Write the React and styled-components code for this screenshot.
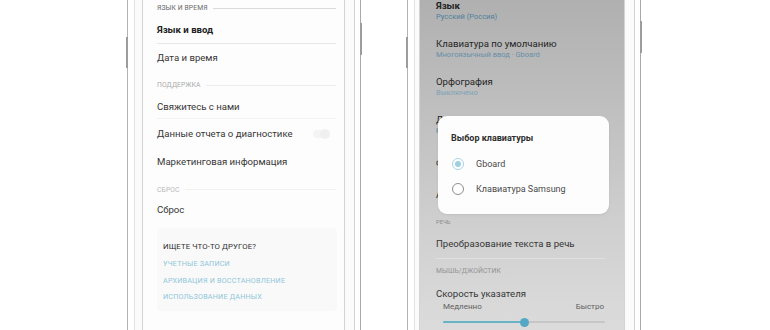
import React from 'react';
import styled, { createGlobalStyle } from 'styled-components';

const GlobalStyle = createGlobalStyle`
  *, *::before, *::after { box-sizing: border-box; }
  html, body { margin: 0; padding: 0; background: #fff; }
  body {
    width: 770px;
    height: 330px;
    overflow: hidden;
    font-family: Roboto, "Noto Sans", "Liberation Sans", sans-serif;
  }
`;

const Stage = styled.div`
  display: flex;
  align-items: flex-start;
  gap: 46px;
  padding-left: 127px;
  height: 330px;
`;

const Phone = styled.div`
  position: relative;
  display: flex;
  width: 234px;
  height: 360px;
  padding: 0 ${({ $padR }) => $padR}px 0 ${({ $padL }) => $padL}px;
  background: #fbfbfb;
  border-left: 1px solid #b3b3b3;
  border-right: 1px solid #a9a9a9;
  box-shadow: inset -5px 0 0 #fff, inset -6px 0 0 #d2d2d2, inset 6px 0 0 #fff, inset 7px 0 0 #e2e2e2;

  /* side keys */
  &::before,
  &::after {
    content: '';
    position: absolute;
    width: 2px;
    height: 31px;
    background: #9c9c9c;
  }
  &::before { left: -2px; top: 37px; }
  &::after { right: -2px; top: ${({ $keyTop }) => $keyTop}px; height: 32px; }
`;

const Screen = styled.div`
  position: relative;
  flex: 1;
  display: flex;
  flex-direction: column;
  overflow: hidden;
  padding: 0 ${({ $padR }) => $padR}px 0 ${({ $padL }) => $padL}px;
  border-left: 1px solid #d3d3d3;
  border-right: 1px solid #d3d3d3;
  background: ${({ $dim }) =>
    $dim
      ? 'linear-gradient(180deg, #b0b0b0 0%, #bfbfbf 30%, #cecece 60%, #d9d9d9 85%, #dddddd 100%)'
      : '#fdfdfd'};
`;

/* ---------- left screen ---------- */

const SectionLabel = styled.div`
  display: flex;
  align-items: center;
  gap: 5px;
  height: 10px;
  margin-top: ${({ $mt }) => $mt}px;
  font-size: ${({ $size }) => $size || 6.8}px;
  line-height: 10px;
  letter-spacing: 0.1px;
  color: ${({ $tone }) => $tone || '#ababab'};
  white-space: nowrap;

  &::after {
    content: '';
    flex: ${({ $noLine }) => ($noLine ? 0 : 1)};
    height: 1px;
    background: ${({ $line }) => $line || '#ececec'};
  }
`;

const Row = styled.div`
  display: flex;
  align-items: center;
  justify-content: space-between;
  margin-top: ${({ $mt }) => $mt || 0}px;
  padding-bottom: ${({ $pb }) => $pb || 0}px;
  line-height: ${({ $lh }) => $lh || 14}px;
  font-size: ${({ $size }) => $size || 9.6}px;
  font-weight: ${({ $bold }) => ($bold ? 700 : 400)};
  color: ${({ $bold }) => ($bold ? '#222' : '#363636')};
  border-bottom: ${({ $divider }) => ($divider ? `1px solid ${$divider}` : 'none')};
  white-space: nowrap;
`;

const Toggle = styled.span`
  position: relative;
  width: 17px;
  height: 8px;
  margin-right: 6px;
  border-radius: 4px;
  background: #f4f4f4;

  &::after {
    content: '';
    position: absolute;
    right: 0;
    top: -1px;
    width: 10px;
    height: 10px;
    border-radius: 50%;
    background: #f0f0f0;
  }
`;

const Card = styled.div`
  display: flex;
  flex-direction: column;
  gap: 7.5px;
  margin-top: 11px;
  margin-right: -1px;
  padding: 13px 6px 10px;
  border-radius: 4px;
  background: #f9f9f9;
`;

const CardTitle = styled.div`
  font-size: 7.8px;
  line-height: 11px;
  color: #303030;
  letter-spacing: 0.1px;
`;

const CardLink = styled.div`
  font-size: 7.2px;
  line-height: 9px;
  color: #8fc6da;
  letter-spacing: 0.2px;
`;

/* ---------- right screen ---------- */

const ItemList = styled.div`
  display: flex;
  flex-direction: column;
  margin-top: -9px;
`;

const Item = styled.div`
  display: flex;
  flex-direction: column;
  justify-content: center;
  height: ${({ $h }) => $h || 38}px;
`;

const ItemTitle = styled.div`
  font-size: 9.6px;
  line-height: 13px;
  font-weight: ${({ $bold }) => ($bold ? 700 : 400)};
  color: #252525;
  white-space: nowrap;
`;

const ItemSub = styled.div`
  font-size: 7.5px;
  line-height: 10px;
  color: ${({ $tone }) => $tone || '#4f7f9a'};
  white-space: nowrap;
`;

const SpeedLabels = styled.div`
  display: flex;
  justify-content: space-between;
  margin-top: 2.5px;
  padding: 0 1px 0 7px;
  font-size: 8px;
  line-height: 10px;
  color: #5e5e5e;
`;

const Slider = styled.div`
  position: relative;
  height: 10px;
  margin: 5px 0 0 7px;
  display: flex;
  align-items: center;
`;

const Track = styled.div`
  position: relative;
  flex: 1;
  height: 2px;
  border-radius: 1px;
  background: #c6c6c6;
`;

const TrackFill = styled.div`
  height: 2px;
  border-radius: 1px;
  background: #69b3c6;
`;

const Thumb = styled.div`
  position: absolute;
  top: 50%;
  width: 9px;
  height: 9px;
  margin: -4.5px 0 0 -4.5px;
  border-radius: 50%;
  background: #54a8c6;
`;

const Dialog = styled.div`
  position: absolute;
  left: 18px;
  top: 116px;
  width: 171px;
  height: 98px;
  padding: 16px 0 0 13px;
  border-radius: 9px;
  background: #fdfdfd;
  box-shadow: 0 1px 3px rgba(0, 0, 0, 0.06);
`;

const DialogTitle = styled.div`
  font-size: 9px;
  line-height: 12px;
  font-weight: 700;
  color: #2e2e2e;
  margin-bottom: 7.5px;
`;

const Option = styled.div`
  display: flex;
  align-items: center;
  gap: 12px;
  height: 25px;
  padding-left: 1px;
  font-size: 9px;
  color: #4a4a4a;
`;

const Radio = styled.span`
  position: relative;
  width: 12px;
  height: 12px;
  border-radius: 50%;
  border: 1px solid ${({ $on }) => ($on ? '#a9d4e4' : '#8e8e8e')};
  background: #fff;

  &::after {
    content: '';
    position: absolute;
    inset: 2px;
    border-radius: 50%;
    background: ${({ $on }) => ($on ? '#9fd0e2' : 'transparent')};
  }
`;

const links = ['УЧЕТНЫЕ ЗАПИСИ', 'АРХИВАЦИЯ И ВОССТАНОВЛЕНИЕ', 'ИСПОЛЬЗОВАНИЕ ДАННЫХ'];

const speed = 0.5;

export default function App() {
  return (
    <>
      <GlobalStyle />
      <Stage>
        <Phone $padL={14} $padR={15} $keyTop={23}>
          <Screen $padL={14} $padR={8}>
            <SectionLabel $mt={3} $tone="#6a6a6a" $line="#dadada">ЯЗЫК И ВРЕМЯ</SectionLabel>
            <Row $mt={10} $pb={6} $bold $divider="#e7e7e7">Язык и ввод</Row>
            <Row $mt={7}>Дата и время</Row>
            <SectionLabel $mt={15}>ПОДДЕРЖКА</SectionLabel>
            <Row $mt={10} $pb={4} $divider="#f3f3f3">Свяжитесь с нами</Row>
            <Row $mt={8}>
              Данные отчета о диагностике
              <Toggle />
            </Row>
            <Row $mt={13.5}>Маркетинговая информация</Row>
            <SectionLabel $mt={16} $tone="#b9b9b9" $line="#f1f1f1">СБРОС</SectionLabel>
            <Row $mt={8}>Сброс</Row>
            <Card>
              <CardTitle>ИЩЕТЕ ЧТО-ТО ДРУГОЕ?</CardTitle>
              {links.map((l) => (
                <CardLink key={l}>{l}</CardLink>
              ))}
            </Card>
          </Screen>
        </Phone>

        <Phone $padL={11} $padR={15} $keyTop={21}>
          <Screen $dim $padL={16} $padR={19}>
            <ItemList>
              <Item>
                <ItemTitle $bold>Язык</ItemTitle>
                <ItemSub>Русский (Россия)</ItemSub>
              </Item>
              <Item>
                <ItemTitle>Клавиатура по умолчанию</ItemTitle>
                <ItemSub $tone="#6790a8">Многоязычный ввод · Gboard</ItemSub>
              </Item>
              <Item>
                <ItemTitle>Орфография</ItemTitle>
                <ItemSub $tone="#7ba2b6">Выключено</ItemSub>
              </Item>
              <Item>
                <ItemTitle>Другой ввод</ItemTitle>
                <ItemSub>Настройки</ItemSub>
              </Item>
              <Item>
                <ItemTitle>Физическая клавиатура</ItemTitle>
              </Item>
              <Item $h={27}>
                <ItemTitle>Автозаполнение</ItemTitle>
              </Item>
            </ItemList>
            <SectionLabel $mt={8.5} $size={5.6} $tone="#8d8d8d" $noLine>РЕЧЬ</SectionLabel>
            <Row $mt={10.5} $pb={7.5} $lh={13} $divider="#e0e0e0">
              Преобразование текста в речь
            </Row>
            <SectionLabel $mt={7} $size={6.8} $tone="#939393" $noLine>МЫШЬ/ДЖОЙСТИК</SectionLabel>
            <Row $mt={11} $lh={13}>Скорость указателя</Row>
            <SpeedLabels>
              <span>Медленно</span>
              <span>Быстро</span>
            </SpeedLabels>
            <Slider>
              <Track>
                <TrackFill style={{ width: `${speed * 100}%` }} />
                <Thumb style={{ left: `${speed * 100}%` }} />
              </Track>
            </Slider>
            <Dialog>
              <DialogTitle>Выбор клавиатуры</DialogTitle>
              <Option>
                <Radio $on />
                Gboard
              </Option>
              <Option>
                <Radio />
                Клавиатура Samsung
              </Option>
            </Dialog>
          </Screen>
        </Phone>
      </Stage>
    </>
  );
}
